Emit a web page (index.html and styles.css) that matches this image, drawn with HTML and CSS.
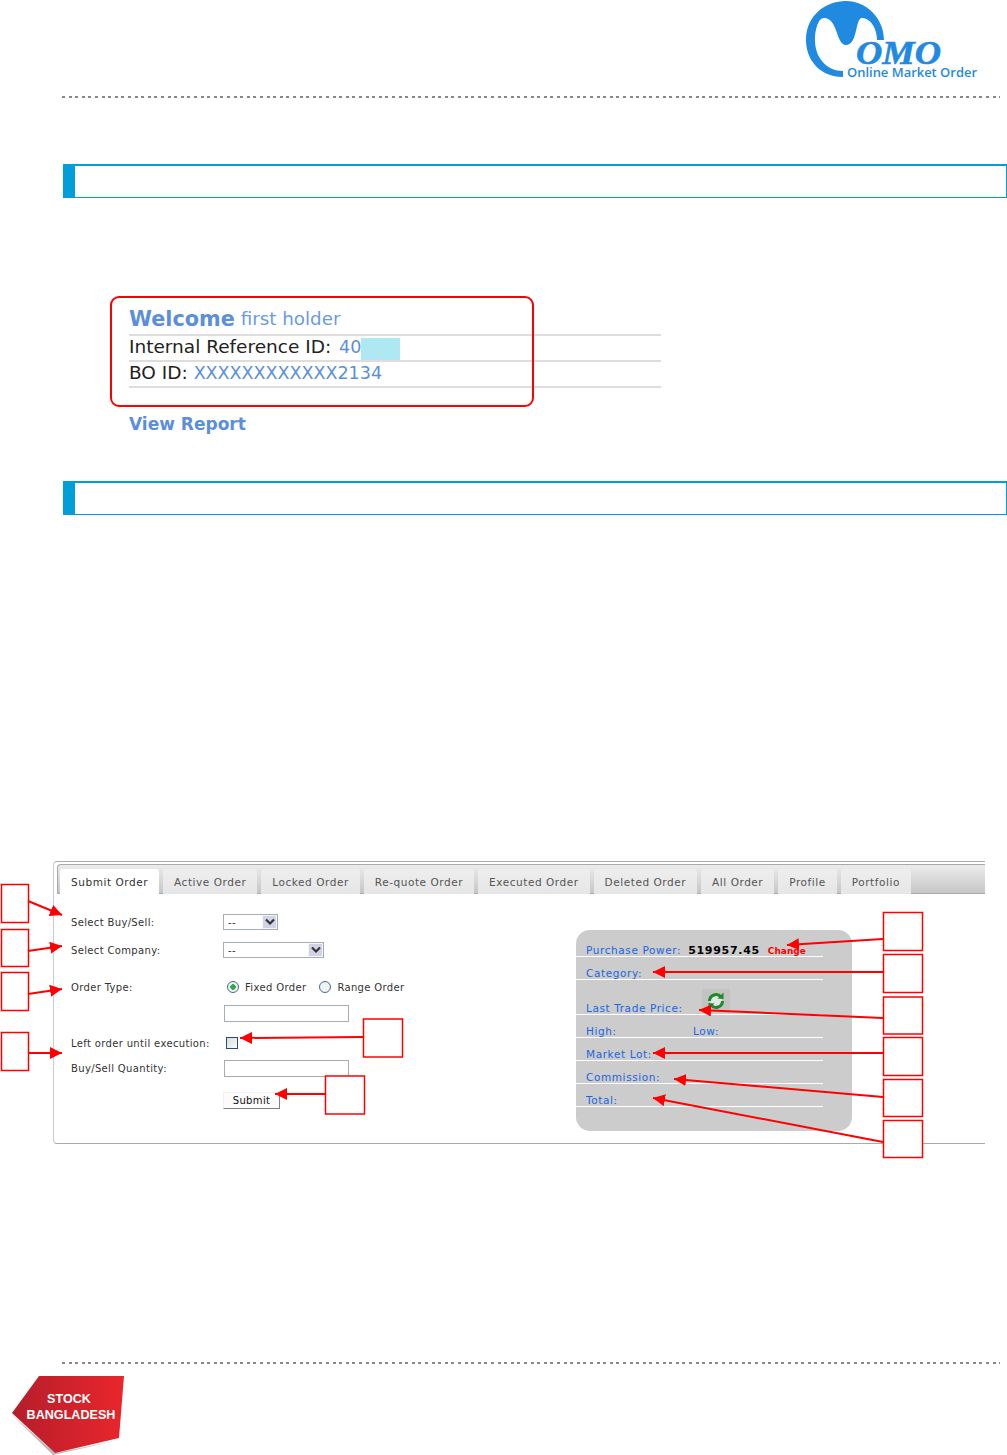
FILE: index.html
```html
<!DOCTYPE html>
<html lang="en">
<head>
<title>Online Market Order - Submit Order</title>
<meta charset="utf-8">
<link rel="stylesheet" href="styles.css">
</head>
<body>

<header class="page-head">
	<svg class="momo-logo" viewBox="806 0 172 82" width="172" height="82">
		<path fill="#1f8ae0" d="M843 77C820 77 806 60 806 40C806 16 825 1 846 1C866 1 884 18 884 40L877 40C877 28 870 18 862 18C855 18 858 45 846 45C836 45 838 18 824 18C818 18 815 30 815 40C815 58 827 71 843 71Z"/>
		<text x="856" y="64" class="momo-word" textLength="85" lengthAdjust="spacingAndGlyphs">OMO</text>
		<text x="847" y="77" class="momo-tag" textLength="130" lengthAdjust="spacingAndGlyphs">Online Market Order</text>
	</svg>
</header>
<div class="dash-line"></div>

<div class="bar bar-first"></div>

<section class="welcome">
	<div class="welcome-row welcome-title"><b>Welcome</b> first holder</div>
	<div class="welcome-row"><span class="dark">Internal Reference ID: </span><span class="blue ref-num">40</span><span class="masked"></span></div>
	<div class="welcome-row"><span class="dark">BO ID: </span><span class="blue">XXXXXXXXXXXX2134</span></div>
	<a class="view-report">View Report</a>
	<div class="welcome-box"></div>
</section>

<div class="bar bar-second"></div>

<section class="annotated">
	<div class="shot">
		<nav class="tabs">
			<a class="tab tab-on">Submit Order</a>
			<a class="tab">Active Order</a>
			<a class="tab">Locked Order</a>
			<a class="tab">Re-quote Order</a>
			<a class="tab">Executed Order</a>
			<a class="tab">Deleted Order</a>
			<a class="tab">All Order</a>
			<a class="tab">Profile</a>
			<a class="tab">Portfolio</a>
		</nav>
		<div class="order-body">
			<form class="order-form">
				<div class="form-row row-first">
					<label>Select Buy/Sell:</label>
					<span class="fake-select select-short">--<i class="select-btn"><svg viewBox="0 0 10 8" width="10" height="8"><path d="M1 1.5L5 5.5L9 1.5" fill="none" stroke="#333" stroke-width="2.2"/></svg></i></span>
				</div>
				<div class="form-row row-gap4">
					<label>Select Company:</label>
					<span class="fake-select select-long">--<i class="select-btn"><svg viewBox="0 0 10 8" width="10" height="8"><path d="M1 1.5L5 5.5L9 1.5" fill="none" stroke="#333" stroke-width="2.2"/></svg></i></span>
				</div>
				<div class="form-row row-gap13">
					<label>Order Type:</label>
					<span class="radio radio-on"></span><span class="radio-text">Fixed Order</span>
					<span class="radio"></span><span class="radio-text">Range Order</span>
				</div>
				<div class="form-row row-gap2">
					<label></label>
					<input class="text-in" type="text">
				</div>
				<div class="form-row row-gap6">
					<label>Left order until execution:</label>
					<span class="check"></span>
				</div>
				<div class="form-row row-gap1">
					<label>Buy/Sell Quantity:</label>
					<input class="text-in" type="text">
				</div>
				<div class="form-row row-gap8">
					<label></label>
					<button class="submit-btn" type="button">Submit</button>
				</div>
			</form>
			<aside class="stats">
				<div class="stat"><span>Purchase Power:</span><b class="power">519957.45</b><b class="change">Change</b></div>
				<div class="stat"><span>Category:</span></div>
				<div class="stat stat-tall"><span>Last Trade Price:</span>
					<i class="refresh"><svg viewBox="0 0 28 24" width="28" height="24">
						<circle cx="14" cy="12" r="6" fill="#e4e8e4"/>
						<path d="M7.5 12A6.5 6.5 0 0 1 19 8" fill="none" stroke="#1d8a2a" stroke-width="3"/>
						<path d="M20.5 12A6.5 6.5 0 0 1 9 16" fill="none" stroke="#1d8a2a" stroke-width="3"/>
						<path d="M21.5 3.5L21.5 10L15.5 9.5Z" fill="#1d8a2a"/>
						<path d="M6.5 20.5L6.5 14L12.5 14.5Z" fill="#1d8a2a"/>
					</svg></i>
				</div>
				<div class="stat"><span class="stat-high">High:</span><span>Low:</span></div>
				<div class="stat"><span>Market Lot:</span></div>
				<div class="stat"><span>Commission:</span></div>
				<div class="stat"><span>Total:</span></div>
			</aside>
		</div>
	</div>

	<!-- red callouts laid over the screenshot -->
	<svg class="callouts" width="1007" height="310" viewBox="0 850 1007 310">
		<defs>
			<marker id="head" markerUnits="userSpaceOnUse" markerWidth="13" markerHeight="12" refX="12" refY="6" orient="auto">
				<path d="M0 0L12 6L0 12Z" fill="#f00"/>
			</marker>
		</defs>
		<g class="boxes">
			<rect x="1.5" y="884.5" width="27" height="38"/>
			<rect x="1.5" y="929.5" width="27" height="37"/>
			<rect x="1.5" y="972.5" width="27" height="38"/>
			<rect x="1.5" y="1032.5" width="27" height="38"/>
			<rect x="363.5" y="1019" width="39" height="38"/>
			<rect x="325.5" y="1076" width="39" height="38"/>
			<rect x="883.5" y="912.5" width="39" height="38"/>
			<rect x="883.5" y="954.5" width="39" height="38"/>
			<rect x="883.5" y="997" width="39" height="37"/>
			<rect x="883.5" y="1037.5" width="39" height="38"/>
			<rect x="883.5" y="1079.5" width="39" height="37"/>
			<rect x="883.5" y="1120.5" width="39" height="37"/>
		</g>
		<g class="arrows">
			<line x1="28" y1="901" x2="62" y2="915" marker-end="url(#head)"/>
			<line x1="28" y1="951" x2="62" y2="946" marker-end="url(#head)"/>
			<line x1="28" y1="994" x2="62" y2="989" marker-end="url(#head)"/>
			<line x1="29" y1="1053" x2="62" y2="1053" marker-end="url(#head)"/>
			<line x1="363" y1="1037" x2="240" y2="1038" marker-end="url(#head)"/>
			<line x1="325" y1="1094" x2="275" y2="1094" marker-end="url(#head)"/>
			<line x1="883" y1="939" x2="787" y2="945" marker-end="url(#head)"/>
			<line x1="883" y1="972" x2="653" y2="972" marker-end="url(#head)"/>
			<line x1="883" y1="1018" x2="699" y2="1010" marker-end="url(#head)"/>
			<line x1="883" y1="1053" x2="653" y2="1053" marker-end="url(#head)"/>
			<line x1="883" y1="1097" x2="674" y2="1079" marker-end="url(#head)"/>
			<line x1="883" y1="1142" x2="653" y2="1098" marker-end="url(#head)"/>
		</g>
	</svg>
</section>

<div class="dash-line foot-line"></div>
<footer class="page-foot">
	<svg class="stock-logo" viewBox="8 1374 120 81" width="120" height="81">
		<defs>
			<linearGradient id="stock" x1="0" y1="0" x2="1" y2="0">
				<stop offset="0" stop-color="#b51d2b"/>
				<stop offset="1" stop-color="#e9262c"/>
			</linearGradient>
		</defs>
		<path d="M11 1414L53 1455L115 1441L55 1453Z" fill="#b9b9b9"/>
		<path d="M39 1376L124 1376L119 1438L55 1453L12 1413Z" fill="url(#stock)"/>
		<text x="69" y="1403" class="stock-text">STOCK</text>
		<text x="71" y="1419" class="stock-text">BANGLADESH</text>
	</svg>
</footer>

</body>
</html>
```

FILE: styles.css
```css
body {
	margin: 0;
	width: 1007px;
	background: #fff;
	font-family: "DejaVu Sans", Verdana, sans-serif;
	color: #222;
	overflow-x: hidden;
}

/* header and footer */
.page-head {
	display: flex;
	justify-content: flex-end;
	height: 96px;
	padding-right: 29px;
	box-sizing: border-box;
}

.momo-logo { display: block; }
.momo-word {
	font-family: "Liberation Serif", serif;
	font-size: 33px;
	font-weight: bold;
	font-style: italic;
	fill: #1f8ae0;
	stroke: #1f8ae0;
	stroke-width: 0.6;
}
.momo-tag {
	font-family: "Open Sans", sans-serif;
	font-size: 13px;
	font-weight: 600;
	fill: #1f8ae0;
}

.dash-line {
	height: 2px;
	margin: 0 7px 0 62px;
	background: repeating-linear-gradient(90deg, #888 0, #888 3px, transparent 3px, transparent 6.6px);
}

.foot-line { margin-top: 199px; }

.page-foot { padding: 10px 0 0 8px; }
.stock-logo { display: block; }
.stock-text {
	font-family: "Liberation Sans", sans-serif;
	font-size: 12.6px;
	font-weight: bold;
	fill: #fff;
	text-anchor: middle;
}

/* section bars */
.bar {
	height: 34px;
	margin-left: 63px;
	box-sizing: border-box;
	border: 1px solid #009fda;
	border-top-width: 2px;
	border-left-width: 12px;
}
.bar-first { margin-top: 66px; }
.bar-second { margin-top: 47px; }

/* welcome block */
.welcome {
	position: relative;
	margin: 107px 0 0 129px;
	font-size: 17.5px;
}

.welcome-row {
	display: flex;
	align-items: center;
	white-space: pre;
	width: 532px;
	height: 21px;
	padding-bottom: 3px;
	border-bottom: 2px solid #ddd;
}

.welcome-title {
	height: 27px;
	padding-bottom: 2px;
	font-size: 18.3px;
	color: #6d9bdc;
}
.welcome-title b {
	font-size: 20.8px;
	color: #5b8fd9;
}

.dark { font-size: 18.5px; }
.blue { color: #5b8fd9; }
.ref-num { margin-left: 2px; }
.masked {
	display: inline-block;
	width: 39px;
	height: 22px;
	margin-top: 4px;
	background: #aee8f2;
}

.view-report {
	display: block;
	margin-top: 26px;
	font-size: 17px;
	font-weight: bold;
	color: #5b8fd9;
}

.welcome-box {
	position: absolute;
	left: -19px;
	top: -9px;
	width: 420px;
	height: 107px;
	border: 2px solid #f00;
	border-radius: 9px;
}

/* screenshot of the order page */
.annotated {
	position: relative;
	margin-top: 346px;
	height: 302px;
}

.callouts {
	position: absolute;
	left: 0;
	top: -11px;
}
.boxes rect {
	fill: #fff;
	stroke: #f00;
	stroke-width: 1.5;
}
.arrows line {
	stroke: #f00;
	stroke-width: 2;
}

.shot {
	margin-left: 53px;
	width: 932px;
	height: 283px;
	box-sizing: border-box;
	padding-top: 2px;
	border-top: 1px solid #aaa;
	border-left: 1px solid #ccc;
	border-bottom: 1px solid #aaa;
	border-top-left-radius: 4px;
	border-bottom-left-radius: 4px;
	font-size: 10.5px;
	letter-spacing: 0.55px;
}

.tabs {
	display: flex;
	gap: 4px;
	height: 30px;
	margin-left: 3px;
	padding: 4px 0 0 2px;
	box-sizing: border-box;
	background: linear-gradient(#ececec, #c6c6c6);
	border-top: 1px solid #aaa;
	border-left: 1px solid #aaa;
	border-bottom: 1px solid #aaa;
	border-top-left-radius: 4px;
}

.tab {
	display: flex;
	align-items: center;
	justify-content: center;
	height: 25px;
	padding: 0 11px;
	background: linear-gradient(#eeeeee, #e6e6e6);
	border-radius: 3px 3px 0 0;
	color: #555;
}
.tab-on {
	background: #fff;
	color: #333;
}

.order-body {
	display: flex;
	padding-left: 17px;
}

.order-form {
	width: 505px;
	padding-top: 16px;
	font-size: 10px;
	letter-spacing: 0.35px;
}

.form-row {
	display: flex;
	align-items: center;
	height: 24px;
	color: #333;
}
.form-row label { width: 152px; flex: none; }
.row-gap1 { margin-top: 1px; }
.row-gap2 { margin-top: 2px; }
.row-gap4 { margin-top: 4px; }
.row-gap6 { margin-top: 6px; }
.row-gap8 { margin-top: 8px; }
.row-gap13 { margin-top: 13px; }

.fake-select {
	display: flex;
	align-items: center;
	justify-content: space-between;
	height: 16px;
	padding-left: 4px;
	box-sizing: border-box;
	border: 1px solid #a5acb2;
	background: #fff;
}
.select-short { width: 55px; }
.select-long { width: 101px; }
.select-btn {
	display: flex;
	align-items: center;
	justify-content: center;
	width: 15px;
	height: 14px;
	background: #d2d2e6;
	border: 1px solid #f4f4fa;
	box-sizing: border-box;
}

.radio {
	width: 12px;
	height: 12px;
	margin: 0 6px 0 4px;
	box-sizing: border-box;
	border: 1px solid #3d6d99;
	border-radius: 50%;
	background: #f2f2ee;
}
.radio-on {
	background: radial-gradient(circle, #2fa84a 0, #2fa84a 2.5px, #f2f2ee 3px);
}
.radio-text { margin-right: 9px; }

.text-in {
	display: block;
	width: 125px;
	height: 17px;
	margin: 0 0 0 1px;
	padding: 0;
	box-sizing: border-box;
	border: 1px solid #a5acb2;
	background: #fff;
}

.check {
	width: 12px;
	height: 12px;
	margin-left: 3px;
	box-sizing: border-box;
	border: 1px solid #1c5180;
	background: linear-gradient(135deg, #dcdcd7, #fbfbf9);
}

.submit-btn {
	width: 57px;
	height: 17px;
	padding: 1px 0 0;
	font: inherit;
	letter-spacing: inherit;
	color: #111;
	background: #fbfbfb;
	border: 1px solid;
	border-color: #f2f2f2 #808080 #808080 #f2f2f2;
}

.stats {
	width: 276px;
	height: 201px;
	margin-top: 36px;
	padding-top: 4px;
	box-sizing: border-box;
	background: #ccc;
	border-radius: 14px;
	color: #1a66e0;
	letter-spacing: 0.6px;
}

.stat {
	position: relative;
	display: flex;
	align-items: flex-end;
	width: 247px;
	height: 23px;
	padding-left: 10px;
	box-sizing: border-box;
	border-bottom: 1px solid #fff;
	line-height: 11px;
	white-space: pre;
}
.stat-tall { height: 35px; }
.stat-high { width: 107px; }

.power {
	margin-left: 7px;
	color: #000;
	font-size: 11px;
	letter-spacing: 0.7px;
}
.change {
	position: relative;
	top: 1px;
	margin-left: 8px;
	color: #f00;
	font-size: 9px;
	letter-spacing: 0;
}

.refresh {
	position: absolute;
	left: 126px;
	top: 9px;
	width: 28px;
	height: 24px;
	background: #c3c3c3;
}
```
